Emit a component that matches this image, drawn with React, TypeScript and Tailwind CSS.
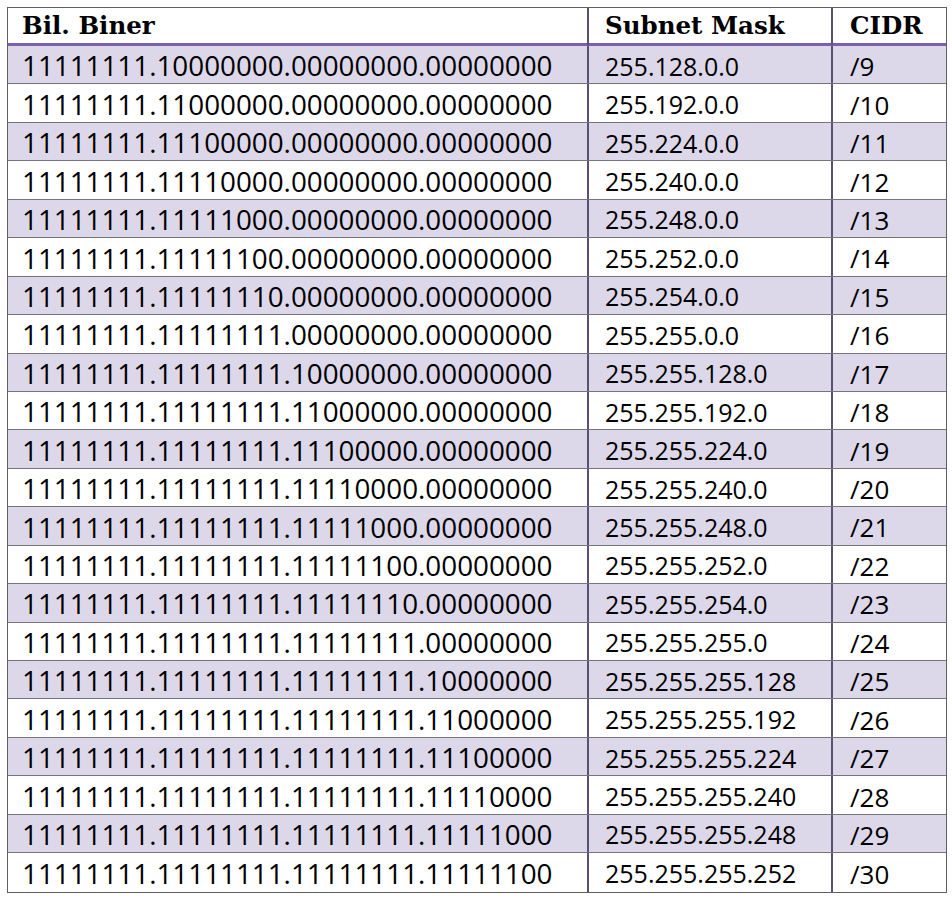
import React from "react";

const rows: [string, string, string][] = [
  ["11111111.10000000.00000000.00000000", "255.128.0.0", "/9"],
  ["11111111.11000000.00000000.00000000", "255.192.0.0", "/10"],
  ["11111111.11100000.00000000.00000000", "255.224.0.0", "/11"],
  ["11111111.11110000.00000000.00000000", "255.240.0.0", "/12"],
  ["11111111.11111000.00000000.00000000", "255.248.0.0", "/13"],
  ["11111111.11111100.00000000.00000000", "255.252.0.0", "/14"],
  ["11111111.11111110.00000000.00000000", "255.254.0.0", "/15"],
  ["11111111.11111111.00000000.00000000", "255.255.0.0", "/16"],
  ["11111111.11111111.10000000.00000000", "255.255.128.0", "/17"],
  ["11111111.11111111.11000000.00000000", "255.255.192.0", "/18"],
  ["11111111.11111111.11100000.00000000", "255.255.224.0", "/19"],
  ["11111111.11111111.11110000.00000000", "255.255.240.0", "/20"],
  ["11111111.11111111.11111000.00000000", "255.255.248.0", "/21"],
  ["11111111.11111111.11111100.00000000", "255.255.252.0", "/22"],
  ["11111111.11111111.11111110.00000000", "255.255.254.0", "/23"],
  ["11111111.11111111.11111111.00000000", "255.255.255.0", "/24"],
  ["11111111.11111111.11111111.10000000", "255.255.255.128", "/25"],
  ["11111111.11111111.11111111.11000000", "255.255.255.192", "/26"],
  ["11111111.11111111.11111111.11100000", "255.255.255.224", "/27"],
  ["11111111.11111111.11111111.11110000", "255.255.255.240", "/28"],
  ["11111111.11111111.11111111.11111000", "255.255.255.248", "/29"],
  ["11111111.11111111.11111111.11111100", "255.255.255.252", "/30"],
];

export default function App() {
  return (
    <div className="w-[952px] h-[902px] bg-white pt-[7px] pl-[7px]">
      <div className="w-[940px] border-[1.5px] border-[#5f5f66] bg-white">
        <div
          className="grid grid-cols-[581px_244px_1fr] h-[38px] border-b-[3px] border-[#7a5fae] text-black"
          style={{ fontFamily: '"DejaVu Serif", serif' }}
        >
          <div className="flex items-center pl-[14px] text-[24.5px] font-bold border-r-2 border-[#5a5070]">
            Bil. Biner
          </div>
          <div className="flex items-center pl-[16px] text-[24.5px] font-bold border-r-2 border-[#5a5070]">
            Subnet Mask
          </div>
          <div className="flex items-center pl-[17px] text-[24.5px] font-bold">CIDR</div>
        </div>
        {rows.map((r, i) => (
          <div
            key={i}
            className={
              "grid grid-cols-[581px_244px_1fr] h-[38.45px] text-black " +
              (i % 2 === 0 ? "bg-[#dcd8ea] " : "bg-white ") +
              (i < rows.length - 1 ? "border-b border-[#77737f]" : "")
            }
            style={{ fontFamily: '"Open Sans", sans-serif' }}
          >
            <div className="flex items-center pl-[14px] pt-[3px] text-[27.8px] leading-none border-r-2 border-[#5a5070]">
              {r[0]}
            </div>
            <div className="flex items-center pl-[16px] pt-[3px] text-[25px] leading-none border-r-2 border-[#5a5070]">
              {r[1]}
            </div>
            <div className="flex items-center pl-[17px] pt-[3px] text-[26px] leading-none">{r[2]}</div>
          </div>
        ))}
      </div>
    </div>
  );
}
